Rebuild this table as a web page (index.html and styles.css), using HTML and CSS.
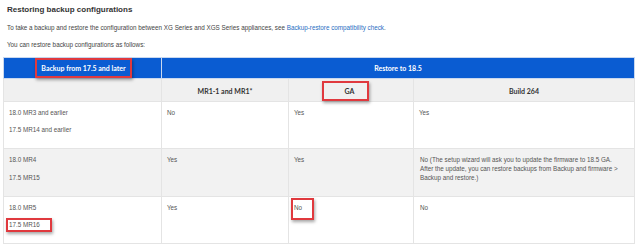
FILE: index.html
```html
<!DOCTYPE html>
<html lang="en">
<head>
<meta charset="utf-8">
<title>Restoring backup configurations</title>
<link rel="stylesheet" href="styles.css">
</head>
<body>
<div class="page">
  <h2 class="title">Restoring backup configurations</h2>
  <p class="intro">To take a backup and restore the configuration between XG Series and XGS Series appliances, see <a href="#" class="link">Backup-restore compatibility check</a>.</p>
  <p class="intro">You can restore backup configurations as follows:</p>
  <table class="matrix">
    <colgroup>
      <col class="c1"><col class="c2"><col class="c3"><col class="c4">
    </colgroup>
    <thead>
      <tr class="head-blue">
        <th><span class="mark mark-head">Backup from 17.5 and later</span></th>
        <th colspan="3">Restore to 18.5</th>
      </tr>
      <tr class="head-gray">
        <th></th>
        <th>MR1-1 and MR1*</th>
        <th><span class="mark mark-ga">GA</span></th>
        <th>Build 264</th>
      </tr>
    </thead>
    <tbody>
      <tr>
        <td><p>18.0 MR3 and earlier</p><p>17.5 MR14 and earlier</p></td>
        <td><p>No</p></td>
        <td><p>Yes</p></td>
        <td><p>Yes</p></td>
      </tr>
      <tr class="alt">
        <td><p>18.0 MR4</p><p class="second">17.5 MR15</p></td>
        <td><p>Yes</p></td>
        <td><p>Yes</p></td>
        <td class="c4cell"><p>No (The setup wizard will ask you to update the firmware to 18.5 GA. After the update, you can restore backups from Backup and firmware &gt; Backup and restore.)</p></td>
      </tr>
      <tr>
        <td><p>18.0 MR5</p><p><span class="mark mark-mr16">17.5 MR16</span></p></td>
        <td><p>Yes</p></td>
        <td><p><span class="mark mark-no">No</span></p></td>
        <td class="c4cell"><p>No</p></td>
      </tr>
    </tbody>
  </table>
</div>
</body>
</html>
```
FILE: styles.css
```css
html, body {
  margin: 0;
  padding: 0;
  background: #ffffff;
}
.page {
  padding: 5px 6px 0 3px;
  font-family: "Liberation Sans", Arial, sans-serif;
  color: #555555;
}
.title {
  margin: 0 0 0 4px;
  font-size: 8px;
  line-height: 10px;
  font-weight: bold;
  color: #333333;
}
.intro {
  margin: 8px 0 0 4px;
  font-size: 6.3px;
  line-height: 9px;
  color: #444444;
}
.link {
  color: #1f6dc2;
  text-decoration: none;
}
.matrix {
  margin-top: 8px;
  width: 631px;
  table-layout: fixed;
  border-collapse: collapse;
  font-size: 6.3px;
  line-height: 9px;
}
.c1 { width: 158px; }
.c2 { width: 127px; }
.c3 { width: 125px; }
.c4 { width: 221px; }
.matrix th,
.matrix td {
  border: 1px solid #e4e4e4;
}
.head-blue th {
  background: #0a5cd2;
  color: #ffffff;
  font-family: Lato, "Liberation Sans", sans-serif;
  font-weight: bold;
  font-size: 7px;
  line-height: 10px;
  height: 20px;
  padding: 0;
  text-align: center;
  vertical-align: middle;
  border-color: #c9d8ef;
}
.head-gray th {
  background: #f0f0f0;
  color: #333333;
  font-family: Lato, "Liberation Sans", sans-serif;
  font-weight: bold;
  font-size: 7px;
  line-height: 20px;
  height: 20px;
  padding: 2px 5px 0;
  text-align: center;
  vertical-align: top;
}
.matrix td {
  vertical-align: top;
  text-align: left;
  padding: 6px 5px 6px;
  color: #555555;
}
.matrix td.c4cell {
  padding-left: 6px;
  padding-right: 8px;
}
.matrix td p {
  margin: 0 0 8px;
}
.matrix td p.second {
  margin-top: 9px;
}
.alt td {
  background: #f2f2f2;
}
.mark {
  display: inline-block;
  border: 2px solid #e0393e;
  box-shadow: 1px 2px 3px rgba(0, 0, 0, 0.35);
}
.mark-head {
  padding: 3px 4px;
  line-height: 10px;
  margin-left: 2px;
}
.mark-ga {
  line-height: 16px;
  padding: 0 13px 0 21px;
  margin-right: 11px;
}
.mark-no {
  padding: 3.5px 10px 5.5px 1px;
  margin: -5.5px -12px -7.5px -3px;
}
.mark-mr16 {
  padding: 0.5px 10px 0.5px 1px;
  margin: -2.5px -12px -2.5px -3px;
}
```
